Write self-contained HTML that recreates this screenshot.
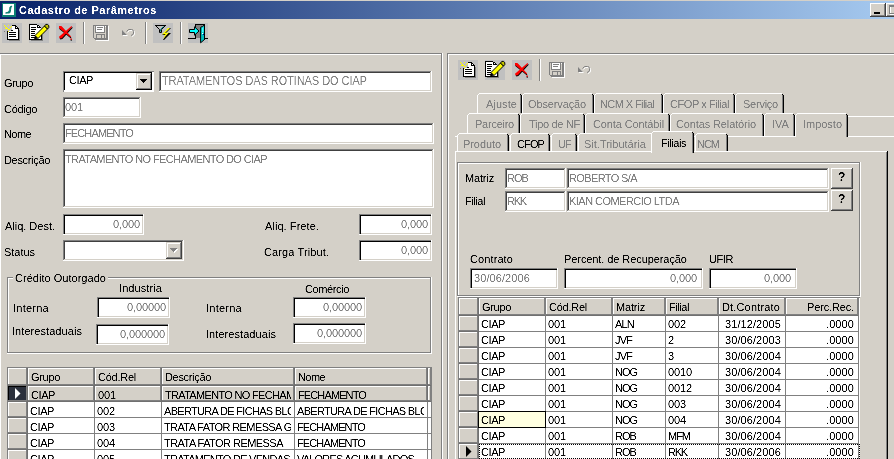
<!DOCTYPE html>
<html><head><meta charset="utf-8"><title>Cadastro de Parâmetros</title><style>
html,body{margin:0;padding:0;}
body{width:894px;height:459px;overflow:hidden;background:#D4D0C8;position:relative;font-family:"Liberation Sans",sans-serif;font-size:11px;}
div{position:absolute;}
svg{position:absolute;overflow:visible;}
.t{position:absolute;white-space:pre;line-height:13px;height:13px;will-change:transform;filter:url(#thr);}
</style></head><body>
<svg width="0" height="0" style="position:absolute"><filter id="thr" x="0" y="0" width="100%" height="100%" color-interpolation-filters="sRGB"><feComponentTransfer><feFuncA type="table" tableValues="0 0 0.25 0.85 1 1"/></feComponentTransfer></filter></svg>
<div style="left:0px;top:1px;width:894px;height:18px;background:linear-gradient(to right,#0A246A 0%,#0A246A 2%,#A6CAF0 100%);"></div>
<span id="t0" class="t" style="top:4px;color:#FFFFFF;font-weight:bold;letter-spacing:0.490px;left:19px;">Cadastro de Parâmetros</span>
<div style="left:2px;top:3px;width:14px;height:14px;background:#0A7F72;"></div>
<div style="left:3px;top:4px;width:11px;height:11px;background:#FFFFFF;"></div>
<svg style="left:2px;top:3px" width="14" height="14" viewBox="0 0 14 14"><path d="M9.8 3.2 C6.8 3.2 8.3 6 7.3 7.5 C6.6 9 5.8 9.5 3.6 10 L7.6 10 C9.3 8.5 7.8 5 9.8 3.2 Z" fill="#0A7F72" stroke="#0A7F72" stroke-width="1"/></svg>
<div style="left:870px;top:3px;width:16px;height:14px;background:#D4D0C8;"></div>
<div style="left:870px;top:3px;width:16px;height:1px;background:#FFFFFF;"></div>
<div style="left:870px;top:3px;width:1px;height:14px;background:#FFFFFF;"></div>
<div style="left:870px;top:16px;width:16px;height:1px;background:#404040;"></div>
<div style="left:885px;top:3px;width:1px;height:14px;background:#404040;"></div>
<div style="left:871px;top:15px;width:14px;height:1px;background:#808080;"></div>
<div style="left:884px;top:4px;width:1px;height:12px;background:#808080;"></div>
<div style="left:874px;top:12px;width:6px;height:2px;background:#000000;"></div>
<div style="left:886px;top:3px;width:16px;height:14px;background:#D4D0C8;"></div>
<div style="left:886px;top:3px;width:16px;height:1px;background:#FFFFFF;"></div>
<div style="left:886px;top:3px;width:1px;height:14px;background:#FFFFFF;"></div>
<div style="left:886px;top:16px;width:16px;height:1px;background:#404040;"></div>
<div style="left:901px;top:3px;width:1px;height:14px;background:#404040;"></div>
<div style="left:887px;top:15px;width:14px;height:1px;background:#808080;"></div>
<div style="left:900px;top:4px;width:1px;height:12px;background:#808080;"></div>
<div style="left:889px;top:5px;width:9px;height:2px;background:#808080;"></div>
<div style="left:889px;top:5px;width:1px;height:9px;background:#808080;"></div>
<div style="left:889px;top:13px;width:9px;height:1px;background:#808080;"></div>
<div style="left:890px;top:14px;width:9px;height:1px;background:#FFFFFF;"></div>
<div style="left:890px;top:7px;width:1px;height:6px;background:#FFFFFF;"></div>
<div style="left:2px;top:23px;width:20px;height:20px;background:#C0C0C0;"></div>
<div style="left:29px;top:23px;width:20px;height:20px;background:#C0C0C0;"></div>
<div style="left:56px;top:23px;width:20px;height:20px;background:#C0C0C0;"></div>
<div style="left:153px;top:23px;width:20px;height:20px;background:#C0C0C0;"></div>
<div style="left:188px;top:23px;width:20px;height:20px;background:#C0C0C0;"></div>
<svg style="left:2px;top:23px" width="20" height="20" viewBox="0 0 20 20" shape-rendering="crispEdges"><rect x="7" y="17" width="11" height="1" fill="#808080"/><rect x="17" y="7" width="1" height="10" fill="#808080"/><polygon points="6,8 10,8 10,3 14,3 17,6 17,17 6,17" fill="#fff"/><rect x="5" y="8" width="1" height="9" fill="#000"/><rect x="5" y="16" width="12" height="1" fill="#000"/><rect x="16" y="6" width="1" height="11" fill="#000"/><rect x="10" y="2" width="4" height="1" fill="#000"/><rect x="13" y="3" width="1" height="3" fill="#000"/><rect x="13" y="5" width="3" height="1" fill="#000"/><rect x="14" y="3" width="1" height="1" fill="#000"/><rect x="15" y="4" width="1" height="1" fill="#000"/><rect x="16" y="5" width="1" height="1" fill="#000"/><rect x="9" y="7" width="2" height="1" fill="#000"/><rect x="7" y="9" width="7" height="1" fill="#000"/><rect x="7" y="11" width="7" height="1" fill="#000"/><rect x="7" y="13" width="7" height="1" fill="#000"/><rect x="2" y="2" width="1" height="1" fill="#FFFF00"/><rect x="3" y="3" width="1" height="1" fill="#FFFF00"/><rect x="4" y="4" width="1" height="1" fill="#FFFF00"/><rect x="5" y="5" width="1" height="1" fill="#FFFF00"/><rect x="6" y="6" width="1" height="1" fill="#FFFF00"/><rect x="6" y="2" width="1" height="1" fill="#FFFF00"/><rect x="9" y="3" width="1" height="1" fill="#FFFF00"/><rect x="8" y="4" width="1" height="1" fill="#FFFF00"/><rect x="3" y="5" width="1" height="1" fill="#FFFF00"/><rect x="4" y="5" width="1" height="1" fill="#FFFF00"/><rect x="7" y="6" width="1" height="1" fill="#FFFF00"/><rect x="6" y="8" width="1" height="1" fill="#FFFF00"/><rect x="2" y="8" width="1" height="1" fill="#808080"/></svg>
<svg style="left:29px;top:23px" width="20" height="20" viewBox="0 0 20 20" shape-rendering="crispEdges"><rect x="2" y="17" width="11" height="1" fill="#808080"/><rect x="13" y="12" width="1" height="6" fill="#808080"/><polygon points="1,2 8,2 11,5 12,5 12,16 1,16" fill="#fff"/><rect x="0" y="1" width="1" height="16" fill="#000"/><rect x="0" y="1" width="8" height="1" fill="#000"/><rect x="0" y="16" width="13" height="1" fill="#000"/><rect x="12" y="10" width="1" height="7" fill="#000"/><rect x="8" y="2" width="1" height="3" fill="#000"/><rect x="8" y="4" width="3" height="1" fill="#000"/><rect x="9" y="2" width="1" height="1" fill="#000"/><rect x="10" y="3" width="1" height="1" fill="#000"/><rect x="11" y="4" width="1" height="1" fill="#000"/><rect x="2" y="4" width="5" height="1" fill="#000"/><rect x="2" y="6" width="5" height="1" fill="#000"/><rect x="2" y="8" width="4" height="1" fill="#000"/><rect x="2" y="10" width="4" height="1" fill="#000"/><rect x="2" y="12" width="4" height="1" fill="#000"/><rect x="2" y="14" width="4" height="1" fill="#000"/><polygon points="6,12.5 9,15.5 18.5,6 15.5,3" fill="#FFFF00" stroke="#000" stroke-width="1" shape-rendering="auto"/><polygon points="15.5,3 18.5,6 19.8,4.6 19.8,2.6 18.4,1.4 16.8,1.4" fill="#C0C000" stroke="#000" stroke-width="1" shape-rendering="auto"/><polygon points="5,16.5 6,12.5 9,15.5" fill="#000" shape-rendering="auto"/></svg>
<svg style="left:56px;top:23px" width="20" height="20" viewBox="0 0 20 20"><polygon points="3,3 5.4,3 15.1,13.5 14.4,14.2 3,5" fill="#000" transform="translate(0.3,1)"/><polygon points="15.5,3.1 16.1,3.8 5.8,15.2 3.7,15.5 3,13.8" fill="#000" transform="translate(0.6,0.9)"/><polygon points="3,3 5.4,3 15.1,13.5 14.4,14.2 3,5" fill="#FF0000"/><polygon points="15.5,3.1 16.1,3.8 5.8,15.2 3.7,15.5 3,13.8" fill="#FF0000"/><rect x="14.6" y="16.4" width="1.4" height="1.2" fill="#000"/><rect x="14.4" y="15.4" width="1.4" height="1.3" fill="#FF0000"/></svg>
<svg style="left:93px;top:25px" width="17" height="17" viewBox="0 0 17 17" shape-rendering="crispEdges"><rect x="3" y="15" width="13" height="1" fill="#fff"/><rect x="15" y="1" width="1" height="15" fill="#fff"/><rect x="0" y="0" width="15" height="1" fill="#808080"/><rect x="0" y="0" width="1" height="13" fill="#808080"/><rect x="13" y="0" width="2" height="15" fill="#808080"/><rect x="1" y="13" width="14" height="1" fill="#808080"/><rect x="2" y="14" width="13" height="1" fill="#808080"/><rect x="3" y="1" width="8" height="6" fill="#fff"/><rect x="2" y="0" width="1" height="8" fill="#808080"/><rect x="11" y="0" width="1" height="8" fill="#808080"/><rect x="2" y="7" width="10" height="1" fill="#808080"/><rect x="4" y="2" width="6" height="1" fill="#808080"/><rect x="4" y="4" width="5" height="1" fill="#808080"/><rect x="12" y="1" width="1" height="1" fill="#fff"/><rect x="3" y="9" width="9" height="1" fill="#808080"/><rect x="3" y="9" width="1" height="4" fill="#808080"/><rect x="11" y="9" width="1" height="4" fill="#808080"/><rect x="8" y="10" width="1" height="3" fill="#808080"/></svg>
<svg style="left:121px;top:27px" width="16" height="12" viewBox="0 0 16 12"><path d="M5.5 4.5 L7.5 2.5 L10.5 2.5 Q12.5 2.5 12.5 4.5 L12.5 6 Q12.5 7.5 11 8 L10 8.5" stroke="#fff" stroke-width="1" fill="none" transform="translate(1,1)"/><polygon points="1,3 1,8 6,8" fill="#fff" transform="translate(1,1)"/><path d="M5.5 4.5 L7.5 2.5 L10.5 2.5 Q12.5 2.5 12.5 4.5 L12.5 6 Q12.5 7.5 11 8 L10 8.5" stroke="#808080" stroke-width="1" fill="none"/><polygon points="1,3 1,8 6,8" fill="#808080"/></svg>
<svg style="left:153px;top:23px" width="20" height="20" viewBox="0 0 20 20" shape-rendering="crispEdges"><polygon points="2.5,2.5 12.5,2.5 8.5,6.5 8.5,9.5 6.5,9.5 6.5,6.5" fill="#C0C0C0" stroke="#000" stroke-width="1" shape-rendering="auto"/><rect x="2" y="2" width="11" height="1" fill="#000"/><path d="M10.5 3.5 L7.5 6.5 L7.5 8.5" stroke="#008080" stroke-width="1" fill="none" shape-rendering="auto"/><polygon points="16,5 18,5 13,10 18,10 11,17 10,17 13,12 9,12" fill="#000" shape-rendering="auto"/><polygon points="15,5 17,5 12,10 16,9.6 10,16 12.5,11 9,11.6" fill="#FFFF00" shape-rendering="auto"/></svg>
<svg style="left:188px;top:23px" width="20" height="20" viewBox="0 0 20 20" shape-rendering="crispEdges"><rect x="8" y="2" width="6" height="13" fill="#808080"/><rect x="7" y="1" width="10" height="1" fill="#000"/><rect x="7" y="1" width="1" height="4" fill="#000"/><rect x="7" y="11" width="1" height="5" fill="#000"/><rect x="0" y="15" width="8" height="1" fill="#000"/><rect x="17" y="15" width="3" height="1" fill="#000"/><polygon points="12.6,4.4 16.5,2 16.5,16.5 12.6,19.8" fill="#00C0C0" stroke="#000" stroke-width="1" shape-rendering="auto"/><rect x="16" y="1" width="1" height="16" fill="#000"/><rect x="14" y="10" width="1" height="1" fill="#fff"/><rect x="15" y="11" width="1" height="1" fill="#000080"/><path d="M14 5 L15.5 4 L15.5 9 L14 9.6 Z" fill="#40FFFF" shape-rendering="auto"/><polygon points="1.5,6.5 6.5,6.5 6.5,3.8 11,8 6.5,12.2 6.5,9.5 1.5,9.5" fill="#00FFFF" stroke="#000" stroke-width="1" shape-rendering="auto"/></svg>
<div style="left:83px;top:22px;width:1px;height:22px;background:#808080;"></div>
<div style="left:84px;top:22px;width:1px;height:22px;background:#FFFFFF;"></div>
<div style="left:145px;top:22px;width:1px;height:22px;background:#808080;"></div>
<div style="left:146px;top:22px;width:1px;height:22px;background:#FFFFFF;"></div>
<div style="left:180px;top:22px;width:1px;height:22px;background:#808080;"></div>
<div style="left:181px;top:22px;width:1px;height:22px;background:#FFFFFF;"></div>
<div style="left:-1px;top:53px;width:444px;height:1px;background:#808080;"></div>
<div style="left:-1px;top:53px;width:1px;height:418px;background:#808080;"></div>
<div style="left:0px;top:54px;width:442px;height:1px;background:#FFFFFF;"></div>
<div style="left:0px;top:54px;width:1px;height:416px;background:#FFFFFF;"></div>
<div style="left:0px;top:469px;width:442px;height:1px;background:#808080;"></div>
<div style="left:441px;top:54px;width:1px;height:416px;background:#808080;"></div>
<div style="left:-1px;top:470px;width:444px;height:1px;background:#FFFFFF;"></div>
<div style="left:442px;top:53px;width:1px;height:418px;background:#FFFFFF;"></div>
<span id="t1" class="t" style="top:77px;color:#000000;letter-spacing:-0.319px;left:4px;">Grupo</span>
<div style="left:63px;top:71px;width:91px;height:21px;background:#FFFFFF;"></div>
<div style="left:63px;top:71px;width:91px;height:1px;background:#808080;"></div>
<div style="left:63px;top:71px;width:1px;height:21px;background:#808080;"></div>
<div style="left:64px;top:72px;width:88px;height:1px;background:#000000;"></div>
<div style="left:64px;top:72px;width:1px;height:18px;background:#000000;"></div>
<div style="left:136px;top:73px;width:16px;height:17px;background:#D4D0C8;"></div>
<div style="left:137px;top:74px;width:13px;height:1px;background:#FFFFFF;"></div>
<div style="left:137px;top:74px;width:1px;height:14px;background:#FFFFFF;"></div>
<div style="left:136px;top:89px;width:16px;height:1px;background:#000000;"></div>
<div style="left:151px;top:73px;width:1px;height:17px;background:#000000;"></div>
<div style="left:137px;top:88px;width:14px;height:1px;background:#808080;"></div>
<div style="left:150px;top:74px;width:1px;height:15px;background:#808080;"></div>
<div style="left:140px;top:79px;width:7px;height:1px;background:#000000;"></div>
<div style="left:141px;top:80px;width:5px;height:1px;background:#000000;"></div>
<div style="left:142px;top:81px;width:3px;height:1px;background:#000000;"></div>
<div style="left:143px;top:82px;width:1px;height:1px;background:#000000;"></div>
<span id="t2" class="t" style="top:74px;color:#000000;letter-spacing:-0.422px;left:69px;">CIAP</span>
<div style="left:159px;top:71px;width:273px;height:21px;background:#FFFFFF;"></div>
<div style="left:159px;top:71px;width:273px;height:1px;background:#808080;"></div>
<div style="left:159px;top:71px;width:1px;height:21px;background:#808080;"></div>
<div style="left:160px;top:72px;width:271px;height:1px;background:#404040;"></div>
<div style="left:160px;top:72px;width:1px;height:19px;background:#404040;"></div>
<div style="left:159px;top:91px;width:273px;height:1px;background:#FFFFFF;"></div>
<div style="left:431px;top:71px;width:1px;height:21px;background:#FFFFFF;"></div>
<div style="left:160px;top:90px;width:271px;height:1px;background:#D4D0C8;"></div>
<div style="left:430px;top:72px;width:1px;height:19px;background:#D4D0C8;"></div>
<span id="t3" class="t" style="top:75px;color:#808080;font-size:12px;left:162px;transform:scaleX(0.9066);transform-origin:0 0;">TRATAMENTOS DAS ROTINAS DO CIAP</span>
<span id="t4" class="t" style="top:103px;color:#000000;letter-spacing:-0.312px;left:4px;">Código</span>
<div style="left:63px;top:97px;width:78px;height:21px;background:#FFFFFF;"></div>
<div style="left:63px;top:97px;width:78px;height:1px;background:#808080;"></div>
<div style="left:63px;top:97px;width:1px;height:21px;background:#808080;"></div>
<div style="left:64px;top:98px;width:76px;height:1px;background:#404040;"></div>
<div style="left:64px;top:98px;width:1px;height:19px;background:#404040;"></div>
<div style="left:63px;top:117px;width:78px;height:1px;background:#FFFFFF;"></div>
<div style="left:140px;top:97px;width:1px;height:21px;background:#FFFFFF;"></div>
<div style="left:64px;top:116px;width:76px;height:1px;background:#D4D0C8;"></div>
<div style="left:139px;top:98px;width:1px;height:19px;background:#D4D0C8;"></div>
<span id="t5" class="t" style="top:101px;color:#808080;letter-spacing:-0.125px;left:65px;">001</span>
<span id="t6" class="t" style="top:128px;color:#000000;letter-spacing:-0.586px;left:4px;">Nome</span>
<div style="left:63px;top:123px;width:371px;height:21px;background:#FFFFFF;"></div>
<div style="left:63px;top:123px;width:371px;height:1px;background:#808080;"></div>
<div style="left:63px;top:123px;width:1px;height:21px;background:#808080;"></div>
<div style="left:64px;top:124px;width:369px;height:1px;background:#404040;"></div>
<div style="left:64px;top:124px;width:1px;height:19px;background:#404040;"></div>
<div style="left:63px;top:143px;width:371px;height:1px;background:#FFFFFF;"></div>
<div style="left:433px;top:123px;width:1px;height:21px;background:#FFFFFF;"></div>
<div style="left:64px;top:142px;width:369px;height:1px;background:#D4D0C8;"></div>
<div style="left:432px;top:124px;width:1px;height:19px;background:#D4D0C8;"></div>
<span id="t7" class="t" style="top:127px;color:#808080;letter-spacing:-0.880px;left:65px;">FECHAMENTO</span>
<span id="t8" class="t" style="top:154px;color:#000000;letter-spacing:-0.323px;left:4px;">Descrição</span>
<div style="left:63px;top:149px;width:371px;height:59px;background:#FFFFFF;"></div>
<div style="left:63px;top:149px;width:371px;height:1px;background:#808080;"></div>
<div style="left:63px;top:149px;width:1px;height:59px;background:#808080;"></div>
<div style="left:64px;top:150px;width:369px;height:1px;background:#404040;"></div>
<div style="left:64px;top:150px;width:1px;height:57px;background:#404040;"></div>
<div style="left:63px;top:207px;width:371px;height:1px;background:#FFFFFF;"></div>
<div style="left:433px;top:149px;width:1px;height:59px;background:#FFFFFF;"></div>
<div style="left:64px;top:206px;width:369px;height:1px;background:#D4D0C8;"></div>
<div style="left:432px;top:150px;width:1px;height:57px;background:#D4D0C8;"></div>
<span id="t9" class="t" style="top:153px;color:#808080;letter-spacing:-0.615px;left:65px;">TRATAMENTO NO FECHAMENTO DO CIAP</span>
<span id="t10" class="t" style="top:220px;color:#000000;letter-spacing:-0.014px;left:5px;">Aliq. Dest.</span>
<div style="left:63px;top:214px;width:81px;height:21px;background:#FFFFFF;"></div>
<div style="left:63px;top:214px;width:81px;height:1px;background:#808080;"></div>
<div style="left:63px;top:214px;width:1px;height:21px;background:#808080;"></div>
<div style="left:64px;top:215px;width:79px;height:1px;background:#404040;"></div>
<div style="left:64px;top:215px;width:1px;height:19px;background:#404040;"></div>
<div style="left:63px;top:234px;width:81px;height:1px;background:#FFFFFF;"></div>
<div style="left:143px;top:214px;width:1px;height:21px;background:#FFFFFF;"></div>
<div style="left:64px;top:233px;width:79px;height:1px;background:#D4D0C8;"></div>
<div style="left:142px;top:215px;width:1px;height:19px;background:#D4D0C8;"></div>
<div style="left:64px;top:215px;width:79px;height:1px;background:#000000;"></div>
<div style="left:64px;top:215px;width:1px;height:19px;background:#000000;"></div>
<span id="t11" class="t" style="top:218px;color:#808080;letter-spacing:-0.113px;right:754.11px;">0,000</span>
<span id="t12" class="t" style="top:246px;color:#000000;letter-spacing:-0.036px;left:4px;">Status</span>
<div style="left:63px;top:240px;width:121px;height:21px;background:#FFFFFF;"></div>
<div style="left:63px;top:240px;width:121px;height:1px;background:#808080;"></div>
<div style="left:63px;top:240px;width:1px;height:21px;background:#808080;"></div>
<div style="left:64px;top:241px;width:119px;height:1px;background:#404040;"></div>
<div style="left:64px;top:241px;width:1px;height:19px;background:#404040;"></div>
<div style="left:63px;top:260px;width:121px;height:1px;background:#FFFFFF;"></div>
<div style="left:183px;top:240px;width:1px;height:21px;background:#FFFFFF;"></div>
<div style="left:64px;top:259px;width:119px;height:1px;background:#D4D0C8;"></div>
<div style="left:182px;top:241px;width:1px;height:19px;background:#D4D0C8;"></div>
<div style="left:166px;top:242px;width:16px;height:17px;background:#D4D0C8;"></div>
<div style="left:167px;top:243px;width:13px;height:1px;background:#FFFFFF;"></div>
<div style="left:167px;top:243px;width:1px;height:14px;background:#FFFFFF;"></div>
<div style="left:166px;top:258px;width:16px;height:1px;background:#404040;"></div>
<div style="left:181px;top:242px;width:1px;height:17px;background:#404040;"></div>
<div style="left:167px;top:257px;width:14px;height:1px;background:#808080;"></div>
<div style="left:180px;top:243px;width:1px;height:15px;background:#808080;"></div>
<div style="left:171px;top:249px;width:7px;height:1px;background:#FFFFFF;"></div>
<div style="left:172px;top:250px;width:5px;height:1px;background:#FFFFFF;"></div>
<div style="left:173px;top:251px;width:3px;height:1px;background:#FFFFFF;"></div>
<div style="left:174px;top:252px;width:1px;height:1px;background:#FFFFFF;"></div>
<div style="left:170px;top:248px;width:7px;height:1px;background:#808080;"></div>
<div style="left:171px;top:249px;width:5px;height:1px;background:#808080;"></div>
<div style="left:172px;top:250px;width:3px;height:1px;background:#808080;"></div>
<div style="left:173px;top:251px;width:1px;height:1px;background:#808080;"></div>
<span id="t13" class="t" style="top:220px;color:#000000;letter-spacing:0.065px;left:265px;">Aliq. Frete.</span>
<div style="left:359px;top:214px;width:73px;height:21px;background:#FFFFFF;"></div>
<div style="left:359px;top:214px;width:73px;height:1px;background:#808080;"></div>
<div style="left:359px;top:214px;width:1px;height:21px;background:#808080;"></div>
<div style="left:360px;top:215px;width:71px;height:1px;background:#404040;"></div>
<div style="left:360px;top:215px;width:1px;height:19px;background:#404040;"></div>
<div style="left:359px;top:234px;width:73px;height:1px;background:#FFFFFF;"></div>
<div style="left:431px;top:214px;width:1px;height:21px;background:#FFFFFF;"></div>
<div style="left:360px;top:233px;width:71px;height:1px;background:#D4D0C8;"></div>
<div style="left:430px;top:215px;width:1px;height:19px;background:#D4D0C8;"></div>
<div style="left:360px;top:215px;width:71px;height:1px;background:#000000;"></div>
<div style="left:360px;top:215px;width:1px;height:19px;background:#000000;"></div>
<span id="t14" class="t" style="top:218px;color:#808080;letter-spacing:-0.113px;right:466.11px;">0,000</span>
<span id="t15" class="t" style="top:246px;color:#000000;letter-spacing:0.107px;left:264px;">Carga Tribut.</span>
<div style="left:359px;top:240px;width:73px;height:21px;background:#FFFFFF;"></div>
<div style="left:359px;top:240px;width:73px;height:1px;background:#808080;"></div>
<div style="left:359px;top:240px;width:1px;height:21px;background:#808080;"></div>
<div style="left:360px;top:241px;width:71px;height:1px;background:#404040;"></div>
<div style="left:360px;top:241px;width:1px;height:19px;background:#404040;"></div>
<div style="left:359px;top:260px;width:73px;height:1px;background:#FFFFFF;"></div>
<div style="left:431px;top:240px;width:1px;height:21px;background:#FFFFFF;"></div>
<div style="left:360px;top:259px;width:71px;height:1px;background:#D4D0C8;"></div>
<div style="left:430px;top:241px;width:1px;height:19px;background:#D4D0C8;"></div>
<div style="left:360px;top:241px;width:71px;height:1px;background:#000000;"></div>
<div style="left:360px;top:241px;width:1px;height:19px;background:#000000;"></div>
<span id="t16" class="t" style="top:244px;color:#808080;letter-spacing:-0.113px;right:466.11px;">0,000</span>
<div style="left:7px;top:277px;width:425px;height:1px;background:#808080;"></div>
<div style="left:7px;top:277px;width:1px;height:77px;background:#808080;"></div>
<div style="left:8px;top:278px;width:423px;height:1px;background:#FFFFFF;"></div>
<div style="left:8px;top:278px;width:1px;height:75px;background:#FFFFFF;"></div>
<div style="left:8px;top:352px;width:423px;height:1px;background:#808080;"></div>
<div style="left:430px;top:278px;width:1px;height:75px;background:#808080;"></div>
<div style="left:7px;top:353px;width:425px;height:1px;background:#FFFFFF;"></div>
<div style="left:431px;top:277px;width:1px;height:77px;background:#FFFFFF;"></div>
<div style="left:13px;top:272px;width:95px;height:12px;background:#D4D0C8;"></div>
<span id="t17" class="t" style="top:272px;color:#000000;letter-spacing:0.026px;left:15px;">Crédito Outorgado</span>
<span id="t18" class="t" style="top:282px;color:#000000;letter-spacing:0.087px;left:119px;">Industria</span>
<span id="t19" class="t" style="top:283px;color:#000000;letter-spacing:-0.383px;left:305px;">Comércio</span>
<span id="t20" class="t" style="top:302px;color:#000000;letter-spacing:0.246px;left:13px;">Interna</span>
<span id="t21" class="t" style="top:325px;color:#000000;letter-spacing:0.060px;left:12px;">Interestaduais</span>
<span id="t22" class="t" style="top:302px;color:#000000;letter-spacing:0.246px;left:206px;">Interna</span>
<span id="t23" class="t" style="top:328px;color:#000000;letter-spacing:0.060px;left:206px;">Interestaduais</span>
<div style="left:97px;top:297px;width:73px;height:21px;background:#FFFFFF;"></div>
<div style="left:97px;top:297px;width:73px;height:1px;background:#808080;"></div>
<div style="left:97px;top:297px;width:1px;height:21px;background:#808080;"></div>
<div style="left:98px;top:298px;width:71px;height:1px;background:#404040;"></div>
<div style="left:98px;top:298px;width:1px;height:19px;background:#404040;"></div>
<div style="left:97px;top:317px;width:73px;height:1px;background:#FFFFFF;"></div>
<div style="left:169px;top:297px;width:1px;height:21px;background:#FFFFFF;"></div>
<div style="left:98px;top:316px;width:71px;height:1px;background:#D4D0C8;"></div>
<div style="left:168px;top:298px;width:1px;height:19px;background:#D4D0C8;"></div>
<div style="left:98px;top:298px;width:71px;height:1px;background:#000000;"></div>
<div style="left:98px;top:298px;width:1px;height:19px;background:#000000;"></div>
<span id="t24" class="t" style="top:301px;color:#808080;letter-spacing:-0.116px;right:728.12px;">0,00000</span>
<div style="left:96px;top:324px;width:73px;height:21px;background:#FFFFFF;"></div>
<div style="left:96px;top:324px;width:73px;height:1px;background:#808080;"></div>
<div style="left:96px;top:324px;width:1px;height:21px;background:#808080;"></div>
<div style="left:97px;top:325px;width:71px;height:1px;background:#404040;"></div>
<div style="left:97px;top:325px;width:1px;height:19px;background:#404040;"></div>
<div style="left:96px;top:344px;width:73px;height:1px;background:#FFFFFF;"></div>
<div style="left:168px;top:324px;width:1px;height:21px;background:#FFFFFF;"></div>
<div style="left:97px;top:343px;width:71px;height:1px;background:#D4D0C8;"></div>
<div style="left:167px;top:325px;width:1px;height:19px;background:#D4D0C8;"></div>
<div style="left:97px;top:325px;width:71px;height:1px;background:#000000;"></div>
<div style="left:97px;top:325px;width:1px;height:19px;background:#000000;"></div>
<span id="t25" class="t" style="top:328px;color:#808080;letter-spacing:-0.117px;right:729.12px;">0,000000</span>
<div style="left:293px;top:297px;width:73px;height:21px;background:#FFFFFF;"></div>
<div style="left:293px;top:297px;width:73px;height:1px;background:#808080;"></div>
<div style="left:293px;top:297px;width:1px;height:21px;background:#808080;"></div>
<div style="left:294px;top:298px;width:71px;height:1px;background:#404040;"></div>
<div style="left:294px;top:298px;width:1px;height:19px;background:#404040;"></div>
<div style="left:293px;top:317px;width:73px;height:1px;background:#FFFFFF;"></div>
<div style="left:365px;top:297px;width:1px;height:21px;background:#FFFFFF;"></div>
<div style="left:294px;top:316px;width:71px;height:1px;background:#D4D0C8;"></div>
<div style="left:364px;top:298px;width:1px;height:19px;background:#D4D0C8;"></div>
<div style="left:294px;top:298px;width:71px;height:1px;background:#000000;"></div>
<div style="left:294px;top:298px;width:1px;height:19px;background:#000000;"></div>
<span id="t26" class="t" style="top:301px;color:#808080;letter-spacing:-0.116px;right:532.12px;">0,00000</span>
<div style="left:293px;top:323px;width:73px;height:21px;background:#FFFFFF;"></div>
<div style="left:293px;top:323px;width:73px;height:1px;background:#808080;"></div>
<div style="left:293px;top:323px;width:1px;height:21px;background:#808080;"></div>
<div style="left:294px;top:324px;width:71px;height:1px;background:#404040;"></div>
<div style="left:294px;top:324px;width:1px;height:19px;background:#404040;"></div>
<div style="left:293px;top:343px;width:73px;height:1px;background:#FFFFFF;"></div>
<div style="left:365px;top:323px;width:1px;height:21px;background:#FFFFFF;"></div>
<div style="left:294px;top:342px;width:71px;height:1px;background:#D4D0C8;"></div>
<div style="left:364px;top:324px;width:1px;height:19px;background:#D4D0C8;"></div>
<div style="left:294px;top:324px;width:71px;height:1px;background:#000000;"></div>
<div style="left:294px;top:324px;width:1px;height:19px;background:#000000;"></div>
<span id="t27" class="t" style="top:327px;color:#808080;letter-spacing:-0.117px;right:532.12px;">0,000000</span>
<div style="left:7px;top:367px;width:425px;height:1px;background:#808080;"></div>
<div style="left:7px;top:367px;width:1px;height:104px;background:#808080;"></div>
<div style="left:431px;top:367px;width:1px;height:104px;background:#808080;"></div>
<div style="left:8px;top:368px;width:423px;height:100px;background:#FFFFFF;"></div>
<div style="left:8px;top:368px;width:19px;height:17px;background:#D4D0C8;"></div>
<div style="left:8px;top:368px;width:19px;height:1px;background:#FFFFFF;"></div>
<div style="left:8px;top:368px;width:1px;height:17px;background:#FFFFFF;"></div>
<div style="left:8px;top:384px;width:19px;height:1px;background:#808080;"></div>
<div style="left:26px;top:368px;width:1px;height:17px;background:#808080;"></div>
<div style="left:28px;top:368px;width:66px;height:17px;background:#D4D0C8;"></div>
<div style="left:28px;top:368px;width:66px;height:1px;background:#FFFFFF;"></div>
<div style="left:28px;top:368px;width:1px;height:17px;background:#FFFFFF;"></div>
<div style="left:28px;top:384px;width:66px;height:1px;background:#808080;"></div>
<div style="left:93px;top:368px;width:1px;height:17px;background:#808080;"></div>
<div style="left:95px;top:368px;width:66px;height:17px;background:#D4D0C8;"></div>
<div style="left:95px;top:368px;width:66px;height:1px;background:#FFFFFF;"></div>
<div style="left:95px;top:368px;width:1px;height:17px;background:#FFFFFF;"></div>
<div style="left:95px;top:384px;width:66px;height:1px;background:#808080;"></div>
<div style="left:160px;top:368px;width:1px;height:17px;background:#808080;"></div>
<div style="left:162px;top:368px;width:132px;height:17px;background:#D4D0C8;"></div>
<div style="left:162px;top:368px;width:132px;height:1px;background:#FFFFFF;"></div>
<div style="left:162px;top:368px;width:1px;height:17px;background:#FFFFFF;"></div>
<div style="left:162px;top:384px;width:132px;height:1px;background:#808080;"></div>
<div style="left:293px;top:368px;width:1px;height:17px;background:#808080;"></div>
<div style="left:295px;top:368px;width:132px;height:17px;background:#D4D0C8;"></div>
<div style="left:295px;top:368px;width:132px;height:1px;background:#FFFFFF;"></div>
<div style="left:295px;top:368px;width:1px;height:17px;background:#FFFFFF;"></div>
<div style="left:295px;top:384px;width:132px;height:1px;background:#808080;"></div>
<div style="left:426px;top:368px;width:1px;height:17px;background:#808080;"></div>
<div style="left:428px;top:368px;width:3px;height:17px;background:#D4D0C8;"></div>
<div style="left:428px;top:368px;width:3px;height:1px;background:#FFFFFF;"></div>
<div style="left:428px;top:368px;width:1px;height:17px;background:#FFFFFF;"></div>
<div style="left:428px;top:384px;width:3px;height:1px;background:#808080;"></div>
<div style="left:430px;top:368px;width:1px;height:17px;background:#808080;"></div>
<div style="left:8px;top:385px;width:423px;height:1px;background:#707070;"></div>
<div style="left:27px;top:368px;width:1px;height:103px;background:#808080;"></div>
<div style="left:94px;top:368px;width:1px;height:103px;background:#808080;"></div>
<div style="left:161px;top:368px;width:1px;height:103px;background:#808080;"></div>
<div style="left:294px;top:368px;width:1px;height:103px;background:#808080;"></div>
<div style="left:427px;top:368px;width:1px;height:103px;background:#808080;"></div>
<div style="left:27px;top:368px;width:1px;height:34px;background:#707070;"></div>
<div style="left:94px;top:368px;width:1px;height:34px;background:#707070;"></div>
<div style="left:161px;top:368px;width:1px;height:34px;background:#707070;"></div>
<div style="left:294px;top:368px;width:1px;height:34px;background:#707070;"></div>
<div style="left:427px;top:368px;width:1px;height:34px;background:#707070;"></div>
<div style="left:8px;top:401px;width:423px;height:1px;background:#808080;"></div>
<div style="left:8px;top:417px;width:423px;height:1px;background:#808080;"></div>
<div style="left:8px;top:433px;width:423px;height:1px;background:#808080;"></div>
<div style="left:8px;top:449px;width:423px;height:1px;background:#808080;"></div>
<div style="left:8px;top:465px;width:423px;height:1px;background:#808080;"></div>
<div style="left:8px;top:386px;width:19px;height:15px;background:#D4D0C8;"></div>
<div style="left:8px;top:386px;width:19px;height:1px;background:#FFFFFF;"></div>
<div style="left:8px;top:386px;width:1px;height:15px;background:#FFFFFF;"></div>
<div style="left:8px;top:400px;width:19px;height:1px;background:#808080;"></div>
<div style="left:26px;top:386px;width:1px;height:15px;background:#808080;"></div>
<div style="left:8px;top:402px;width:19px;height:15px;background:#D4D0C8;"></div>
<div style="left:8px;top:402px;width:19px;height:1px;background:#FFFFFF;"></div>
<div style="left:8px;top:402px;width:1px;height:15px;background:#FFFFFF;"></div>
<div style="left:8px;top:416px;width:19px;height:1px;background:#808080;"></div>
<div style="left:26px;top:402px;width:1px;height:15px;background:#808080;"></div>
<div style="left:8px;top:418px;width:19px;height:15px;background:#D4D0C8;"></div>
<div style="left:8px;top:418px;width:19px;height:1px;background:#FFFFFF;"></div>
<div style="left:8px;top:418px;width:1px;height:15px;background:#FFFFFF;"></div>
<div style="left:8px;top:432px;width:19px;height:1px;background:#808080;"></div>
<div style="left:26px;top:418px;width:1px;height:15px;background:#808080;"></div>
<div style="left:8px;top:434px;width:19px;height:15px;background:#D4D0C8;"></div>
<div style="left:8px;top:434px;width:19px;height:1px;background:#FFFFFF;"></div>
<div style="left:8px;top:434px;width:1px;height:15px;background:#FFFFFF;"></div>
<div style="left:8px;top:448px;width:19px;height:1px;background:#808080;"></div>
<div style="left:26px;top:434px;width:1px;height:15px;background:#808080;"></div>
<div style="left:8px;top:450px;width:19px;height:15px;background:#D4D0C8;"></div>
<div style="left:8px;top:450px;width:19px;height:1px;background:#FFFFFF;"></div>
<div style="left:8px;top:450px;width:1px;height:15px;background:#FFFFFF;"></div>
<div style="left:8px;top:464px;width:19px;height:1px;background:#808080;"></div>
<div style="left:26px;top:450px;width:1px;height:15px;background:#808080;"></div>
<div style="left:27px;top:368px;width:1px;height:103px;background:#707070;"></div>
<div style="left:8px;top:401px;width:20px;height:1px;background:#707070;"></div>
<div style="left:8px;top:417px;width:20px;height:1px;background:#707070;"></div>
<div style="left:8px;top:433px;width:20px;height:1px;background:#707070;"></div>
<div style="left:8px;top:449px;width:20px;height:1px;background:#707070;"></div>
<div style="left:8px;top:465px;width:20px;height:1px;background:#707070;"></div>
<div style="left:28px;top:386px;width:66px;height:15px;background:#D4D0C8;"></div>
<div style="left:28px;top:386px;width:66px;height:1px;background:#FFFFFF;"></div>
<div style="left:28px;top:386px;width:1px;height:15px;background:#FFFFFF;"></div>
<div style="left:28px;top:400px;width:66px;height:1px;background:#808080;"></div>
<div style="left:93px;top:386px;width:1px;height:15px;background:#808080;"></div>
<div style="left:95px;top:386px;width:66px;height:15px;background:#D4D0C8;"></div>
<div style="left:95px;top:386px;width:66px;height:1px;background:#FFFFFF;"></div>
<div style="left:95px;top:386px;width:1px;height:15px;background:#FFFFFF;"></div>
<div style="left:95px;top:400px;width:66px;height:1px;background:#808080;"></div>
<div style="left:160px;top:386px;width:1px;height:15px;background:#808080;"></div>
<div style="left:162px;top:386px;width:132px;height:15px;background:#D4D0C8;"></div>
<div style="left:162px;top:386px;width:132px;height:1px;background:#FFFFFF;"></div>
<div style="left:162px;top:386px;width:1px;height:15px;background:#FFFFFF;"></div>
<div style="left:162px;top:400px;width:132px;height:1px;background:#808080;"></div>
<div style="left:293px;top:386px;width:1px;height:15px;background:#808080;"></div>
<div style="left:295px;top:386px;width:132px;height:15px;background:#D4D0C8;"></div>
<div style="left:295px;top:386px;width:132px;height:1px;background:#FFFFFF;"></div>
<div style="left:295px;top:386px;width:1px;height:15px;background:#FFFFFF;"></div>
<div style="left:295px;top:400px;width:132px;height:1px;background:#808080;"></div>
<div style="left:426px;top:386px;width:1px;height:15px;background:#808080;"></div>
<div style="left:428px;top:386px;width:3px;height:15px;background:#D4D0C8;"></div>
<div style="left:428px;top:386px;width:3px;height:1px;background:#FFFFFF;"></div>
<div style="left:428px;top:386px;width:1px;height:15px;background:#FFFFFF;"></div>
<div style="left:428px;top:400px;width:3px;height:1px;background:#808080;"></div>
<div style="left:430px;top:386px;width:1px;height:15px;background:#808080;"></div>
<div style="left:8px;top:401px;width:423px;height:1px;background:#707070;"></div>
<div style="left:8px;top:386px;width:18px;height:14px;background:#2B303C;"></div>
<div style="left:8px;top:386px;width:18px;height:1px;background:#000000;"></div>
<div style="left:8px;top:386px;width:1px;height:14px;background:#000000;"></div>
<svg style="left:15px;top:388px" width="7" height="11"><path d="M0 0 L0 11 L5.5 5.5 Z" fill="#fff"/></svg>
<span id="t28" class="t" style="top:371px;color:#000000;letter-spacing:-0.319px;left:31px;">Grupo</span>
<span id="t29" class="t" style="top:371px;color:#000000;letter-spacing:-0.250px;left:98px;">Cód.Rel</span>
<span id="t30" class="t" style="top:371px;color:#000000;letter-spacing:-0.323px;left:165px;">Descrição</span>
<span id="t31" class="t" style="top:371px;color:#000000;letter-spacing:-0.586px;left:298px;">Nome</span>
<span id="t32" class="t" style="top:389px;color:#000000;letter-spacing:-0.422px;left:31px;width:60px;overflow:hidden;">CIAP</span>
<span id="t33" class="t" style="top:389px;color:#000000;letter-spacing:-0.125px;left:98px;width:60px;overflow:hidden;">001</span>
<span id="t34" class="t" style="top:389px;color:#000000;letter-spacing:-0.682px;left:165px;width:126px;overflow:hidden;">TRATAMENTO NO FECHAMENTO</span>
<span id="t35" class="t" style="top:389px;color:#000000;letter-spacing:-0.880px;left:298px;width:126px;overflow:hidden;">FECHAMENTO</span>
<span id="t36" class="t" style="top:405px;color:#000000;letter-spacing:-0.422px;left:30px;width:61px;overflow:hidden;">CIAP</span>
<span id="t37" class="t" style="top:405px;color:#000000;letter-spacing:-0.125px;left:97px;width:61px;overflow:hidden;">002</span>
<span id="t38" class="t" style="top:405px;color:#000000;letter-spacing:-0.685px;left:164px;width:127px;overflow:hidden;">ABERTURA DE FICHAS BLOCO</span>
<span id="t39" class="t" style="top:405px;color:#000000;letter-spacing:-0.685px;left:297px;width:127px;overflow:hidden;">ABERTURA DE FICHAS BLOCO</span>
<span id="t40" class="t" style="top:421px;color:#000000;letter-spacing:-0.422px;left:30px;width:61px;overflow:hidden;">CIAP</span>
<span id="t41" class="t" style="top:421px;color:#000000;letter-spacing:-0.125px;left:97px;width:61px;overflow:hidden;">003</span>
<span id="t42" class="t" style="top:421px;color:#000000;letter-spacing:-0.608px;left:164px;width:127px;overflow:hidden;">TRATA FATOR REMESSA GERAL</span>
<span id="t43" class="t" style="top:421px;color:#000000;letter-spacing:-0.880px;left:297px;width:127px;overflow:hidden;">FECHAMENTO</span>
<span id="t44" class="t" style="top:437px;color:#000000;letter-spacing:-0.422px;left:30px;width:61px;overflow:hidden;">CIAP</span>
<span id="t45" class="t" style="top:437px;color:#000000;letter-spacing:-0.125px;left:97px;width:61px;overflow:hidden;">004</span>
<span id="t46" class="t" style="top:437px;color:#000000;letter-spacing:-0.549px;left:164px;width:127px;overflow:hidden;">TRATA FATOR REMESSA</span>
<span id="t47" class="t" style="top:437px;color:#000000;letter-spacing:-0.880px;left:297px;width:127px;overflow:hidden;">FECHAMENTO</span>
<span id="t48" class="t" style="top:453px;color:#000000;letter-spacing:-0.422px;left:30px;width:61px;overflow:hidden;">CIAP</span>
<span id="t49" class="t" style="top:453px;color:#000000;letter-spacing:-0.125px;left:97px;width:61px;overflow:hidden;">005</span>
<span id="t50" class="t" style="top:453px;color:#000000;letter-spacing:-0.730px;left:164px;width:127px;overflow:hidden;">TRATAMENTO DE VENDAS</span>
<span id="t51" class="t" style="top:453px;color:#000000;letter-spacing:-0.793px;left:297px;width:127px;overflow:hidden;">VALORES ACUMULADOS</span>
<div style="left:447px;top:53px;width:454px;height:1px;background:#808080;"></div>
<div style="left:447px;top:53px;width:1px;height:418px;background:#808080;"></div>
<div style="left:448px;top:54px;width:452px;height:1px;background:#FFFFFF;"></div>
<div style="left:448px;top:54px;width:1px;height:416px;background:#FFFFFF;"></div>
<div style="left:448px;top:469px;width:452px;height:1px;background:#808080;"></div>
<div style="left:899px;top:54px;width:1px;height:416px;background:#808080;"></div>
<div style="left:447px;top:470px;width:454px;height:1px;background:#FFFFFF;"></div>
<div style="left:900px;top:53px;width:1px;height:418px;background:#FFFFFF;"></div>
<div style="left:458px;top:60px;width:20px;height:20px;background:#C0C0C0;"></div>
<div style="left:485px;top:60px;width:20px;height:20px;background:#C0C0C0;"></div>
<div style="left:512px;top:60px;width:20px;height:20px;background:#C0C0C0;"></div>
<div style="left:539px;top:59px;width:1px;height:22px;background:#808080;"></div>
<div style="left:540px;top:59px;width:1px;height:22px;background:#FFFFFF;"></div>
<svg style="left:458px;top:60px" width="20" height="20" viewBox="0 0 20 20" shape-rendering="crispEdges"><rect x="7" y="17" width="11" height="1" fill="#808080"/><rect x="17" y="7" width="1" height="10" fill="#808080"/><polygon points="6,8 10,8 10,3 14,3 17,6 17,17 6,17" fill="#fff"/><rect x="5" y="8" width="1" height="9" fill="#000"/><rect x="5" y="16" width="12" height="1" fill="#000"/><rect x="16" y="6" width="1" height="11" fill="#000"/><rect x="10" y="2" width="4" height="1" fill="#000"/><rect x="13" y="3" width="1" height="3" fill="#000"/><rect x="13" y="5" width="3" height="1" fill="#000"/><rect x="14" y="3" width="1" height="1" fill="#000"/><rect x="15" y="4" width="1" height="1" fill="#000"/><rect x="16" y="5" width="1" height="1" fill="#000"/><rect x="9" y="7" width="2" height="1" fill="#000"/><rect x="7" y="9" width="7" height="1" fill="#000"/><rect x="7" y="11" width="7" height="1" fill="#000"/><rect x="7" y="13" width="7" height="1" fill="#000"/><rect x="2" y="2" width="1" height="1" fill="#FFFF00"/><rect x="3" y="3" width="1" height="1" fill="#FFFF00"/><rect x="4" y="4" width="1" height="1" fill="#FFFF00"/><rect x="5" y="5" width="1" height="1" fill="#FFFF00"/><rect x="6" y="6" width="1" height="1" fill="#FFFF00"/><rect x="6" y="2" width="1" height="1" fill="#FFFF00"/><rect x="9" y="3" width="1" height="1" fill="#FFFF00"/><rect x="8" y="4" width="1" height="1" fill="#FFFF00"/><rect x="3" y="5" width="1" height="1" fill="#FFFF00"/><rect x="4" y="5" width="1" height="1" fill="#FFFF00"/><rect x="7" y="6" width="1" height="1" fill="#FFFF00"/><rect x="6" y="8" width="1" height="1" fill="#FFFF00"/><rect x="2" y="8" width="1" height="1" fill="#808080"/></svg>
<svg style="left:485px;top:60px" width="20" height="20" viewBox="0 0 20 20" shape-rendering="crispEdges"><rect x="2" y="17" width="11" height="1" fill="#808080"/><rect x="13" y="12" width="1" height="6" fill="#808080"/><polygon points="1,2 8,2 11,5 12,5 12,16 1,16" fill="#fff"/><rect x="0" y="1" width="1" height="16" fill="#000"/><rect x="0" y="1" width="8" height="1" fill="#000"/><rect x="0" y="16" width="13" height="1" fill="#000"/><rect x="12" y="10" width="1" height="7" fill="#000"/><rect x="8" y="2" width="1" height="3" fill="#000"/><rect x="8" y="4" width="3" height="1" fill="#000"/><rect x="9" y="2" width="1" height="1" fill="#000"/><rect x="10" y="3" width="1" height="1" fill="#000"/><rect x="11" y="4" width="1" height="1" fill="#000"/><rect x="2" y="4" width="5" height="1" fill="#000"/><rect x="2" y="6" width="5" height="1" fill="#000"/><rect x="2" y="8" width="4" height="1" fill="#000"/><rect x="2" y="10" width="4" height="1" fill="#000"/><rect x="2" y="12" width="4" height="1" fill="#000"/><rect x="2" y="14" width="4" height="1" fill="#000"/><polygon points="6,12.5 9,15.5 18.5,6 15.5,3" fill="#FFFF00" stroke="#000" stroke-width="1" shape-rendering="auto"/><polygon points="15.5,3 18.5,6 19.8,4.6 19.8,2.6 18.4,1.4 16.8,1.4" fill="#C0C000" stroke="#000" stroke-width="1" shape-rendering="auto"/><polygon points="5,16.5 6,12.5 9,15.5" fill="#000" shape-rendering="auto"/></svg>
<svg style="left:512px;top:60px" width="20" height="20" viewBox="0 0 20 20"><polygon points="3,3 5.4,3 15.1,13.5 14.4,14.2 3,5" fill="#000" transform="translate(0.3,1)"/><polygon points="15.5,3.1 16.1,3.8 5.8,15.2 3.7,15.5 3,13.8" fill="#000" transform="translate(0.6,0.9)"/><polygon points="3,3 5.4,3 15.1,13.5 14.4,14.2 3,5" fill="#FF0000"/><polygon points="15.5,3.1 16.1,3.8 5.8,15.2 3.7,15.5 3,13.8" fill="#FF0000"/><rect x="14.6" y="16.4" width="1.4" height="1.2" fill="#000"/><rect x="14.4" y="15.4" width="1.4" height="1.3" fill="#FF0000"/></svg>
<svg style="left:549px;top:62px" width="17" height="17" viewBox="0 0 17 17" shape-rendering="crispEdges"><rect x="3" y="15" width="13" height="1" fill="#fff"/><rect x="15" y="1" width="1" height="15" fill="#fff"/><rect x="0" y="0" width="15" height="1" fill="#808080"/><rect x="0" y="0" width="1" height="13" fill="#808080"/><rect x="13" y="0" width="2" height="15" fill="#808080"/><rect x="1" y="13" width="14" height="1" fill="#808080"/><rect x="2" y="14" width="13" height="1" fill="#808080"/><rect x="3" y="1" width="8" height="6" fill="#fff"/><rect x="2" y="0" width="1" height="8" fill="#808080"/><rect x="11" y="0" width="1" height="8" fill="#808080"/><rect x="2" y="7" width="10" height="1" fill="#808080"/><rect x="4" y="2" width="6" height="1" fill="#808080"/><rect x="4" y="4" width="5" height="1" fill="#808080"/><rect x="12" y="1" width="1" height="1" fill="#fff"/><rect x="3" y="9" width="9" height="1" fill="#808080"/><rect x="3" y="9" width="1" height="4" fill="#808080"/><rect x="11" y="9" width="1" height="4" fill="#808080"/><rect x="8" y="10" width="1" height="3" fill="#808080"/></svg>
<svg style="left:577px;top:64px" width="16" height="12" viewBox="0 0 16 12"><path d="M5.5 4.5 L7.5 2.5 L10.5 2.5 Q12.5 2.5 12.5 4.5 L12.5 6 Q12.5 7.5 11 8 L10 8.5" stroke="#fff" stroke-width="1" fill="none" transform="translate(1,1)"/><polygon points="1,3 1,8 6,8" fill="#fff" transform="translate(1,1)"/><path d="M5.5 4.5 L7.5 2.5 L10.5 2.5 Q12.5 2.5 12.5 4.5 L12.5 6 Q12.5 7.5 11 8 L10 8.5" stroke="#808080" stroke-width="1" fill="none"/><polygon points="1,3 1,8 6,8" fill="#808080"/></svg>
<div style="left:477px;top:93px;width:45px;height:21px;background:#D4D0C8;"></div>
<div style="left:477px;top:95px;width:1px;height:19px;background:#FFFFFF;"></div>
<div style="left:478px;top:94px;width:1px;height:1px;background:#FFFFFF;"></div>
<div style="left:479px;top:93px;width:41px;height:1px;background:#FFFFFF;"></div>
<div style="left:520px;top:95px;width:1px;height:19px;background:#808080;"></div>
<div style="left:521px;top:95px;width:1px;height:19px;background:#000000;"></div>
<div style="left:520px;top:94px;width:1px;height:1px;background:#000000;"></div>
<span id="t52" class="t" style="top:98px;color:#808080;letter-spacing:0.068px;left:486px;">Ajuste</span>
<div style="left:522px;top:93px;width:72px;height:21px;background:#D4D0C8;"></div>
<div style="left:522px;top:95px;width:1px;height:19px;background:#FFFFFF;"></div>
<div style="left:523px;top:94px;width:1px;height:1px;background:#FFFFFF;"></div>
<div style="left:524px;top:93px;width:68px;height:1px;background:#FFFFFF;"></div>
<div style="left:592px;top:95px;width:1px;height:19px;background:#808080;"></div>
<div style="left:593px;top:95px;width:1px;height:19px;background:#000000;"></div>
<div style="left:592px;top:94px;width:1px;height:1px;background:#000000;"></div>
<span id="t53" class="t" style="top:98px;color:#808080;letter-spacing:-0.134px;left:528px;">Observação</span>
<div style="left:594px;top:93px;width:69px;height:21px;background:#D4D0C8;"></div>
<div style="left:594px;top:95px;width:1px;height:19px;background:#FFFFFF;"></div>
<div style="left:595px;top:94px;width:1px;height:1px;background:#FFFFFF;"></div>
<div style="left:596px;top:93px;width:65px;height:1px;background:#FFFFFF;"></div>
<div style="left:661px;top:95px;width:1px;height:19px;background:#808080;"></div>
<div style="left:662px;top:95px;width:1px;height:19px;background:#000000;"></div>
<div style="left:661px;top:94px;width:1px;height:1px;background:#000000;"></div>
<span id="t54" class="t" style="top:98px;color:#808080;letter-spacing:-0.591px;left:600px;">NCM X Filial</span>
<div style="left:663px;top:93px;width:72px;height:21px;background:#D4D0C8;"></div>
<div style="left:663px;top:95px;width:1px;height:19px;background:#FFFFFF;"></div>
<div style="left:664px;top:94px;width:1px;height:1px;background:#FFFFFF;"></div>
<div style="left:665px;top:93px;width:68px;height:1px;background:#FFFFFF;"></div>
<div style="left:733px;top:95px;width:1px;height:19px;background:#808080;"></div>
<div style="left:734px;top:95px;width:1px;height:19px;background:#000000;"></div>
<div style="left:733px;top:94px;width:1px;height:1px;background:#000000;"></div>
<span id="t55" class="t" style="top:98px;color:#808080;letter-spacing:-0.429px;left:670px;">CFOP x Filial</span>
<div style="left:735px;top:93px;width:49px;height:21px;background:#D4D0C8;"></div>
<div style="left:735px;top:95px;width:1px;height:19px;background:#FFFFFF;"></div>
<div style="left:736px;top:94px;width:1px;height:1px;background:#FFFFFF;"></div>
<div style="left:737px;top:93px;width:45px;height:1px;background:#FFFFFF;"></div>
<div style="left:782px;top:95px;width:1px;height:19px;background:#808080;"></div>
<div style="left:783px;top:95px;width:1px;height:19px;background:#000000;"></div>
<div style="left:782px;top:94px;width:1px;height:1px;background:#000000;"></div>
<span id="t56" class="t" style="top:98px;color:#808080;letter-spacing:-0.241px;left:743px;">Serviço</span>
<div style="left:467px;top:113px;width:53px;height:23px;background:#D4D0C8;"></div>
<div style="left:467px;top:115px;width:1px;height:21px;background:#FFFFFF;"></div>
<div style="left:468px;top:114px;width:1px;height:1px;background:#FFFFFF;"></div>
<div style="left:469px;top:113px;width:49px;height:1px;background:#FFFFFF;"></div>
<div style="left:518px;top:115px;width:1px;height:21px;background:#808080;"></div>
<div style="left:519px;top:115px;width:1px;height:21px;background:#000000;"></div>
<div style="left:518px;top:114px;width:1px;height:1px;background:#000000;"></div>
<span id="t57" class="t" style="top:118px;color:#808080;letter-spacing:-0.246px;left:475px;">Parceiro</span>
<div style="left:520px;top:113px;width:65px;height:23px;background:#D4D0C8;"></div>
<div style="left:520px;top:115px;width:1px;height:21px;background:#FFFFFF;"></div>
<div style="left:521px;top:114px;width:1px;height:1px;background:#FFFFFF;"></div>
<div style="left:522px;top:113px;width:61px;height:1px;background:#FFFFFF;"></div>
<div style="left:583px;top:115px;width:1px;height:21px;background:#808080;"></div>
<div style="left:584px;top:115px;width:1px;height:21px;background:#000000;"></div>
<div style="left:583px;top:114px;width:1px;height:1px;background:#000000;"></div>
<span id="t58" class="t" style="top:118px;color:#808080;letter-spacing:-0.303px;left:529px;">Tipo de NF</span>
<div style="left:585px;top:113px;width:85px;height:23px;background:#D4D0C8;"></div>
<div style="left:585px;top:115px;width:1px;height:21px;background:#FFFFFF;"></div>
<div style="left:586px;top:114px;width:1px;height:1px;background:#FFFFFF;"></div>
<div style="left:587px;top:113px;width:81px;height:1px;background:#FFFFFF;"></div>
<div style="left:668px;top:115px;width:1px;height:21px;background:#808080;"></div>
<div style="left:669px;top:115px;width:1px;height:21px;background:#000000;"></div>
<div style="left:668px;top:114px;width:1px;height:1px;background:#000000;"></div>
<span id="t59" class="t" style="top:118px;color:#808080;letter-spacing:-0.129px;left:593px;">Conta Contábil</span>
<div style="left:670px;top:113px;width:94px;height:23px;background:#D4D0C8;"></div>
<div style="left:670px;top:115px;width:1px;height:21px;background:#FFFFFF;"></div>
<div style="left:671px;top:114px;width:1px;height:1px;background:#FFFFFF;"></div>
<div style="left:672px;top:113px;width:90px;height:1px;background:#FFFFFF;"></div>
<div style="left:762px;top:115px;width:1px;height:21px;background:#808080;"></div>
<div style="left:763px;top:115px;width:1px;height:21px;background:#000000;"></div>
<div style="left:762px;top:114px;width:1px;height:1px;background:#000000;"></div>
<span id="t60" class="t" style="top:118px;color:#808080;letter-spacing:-0.123px;left:676px;">Contas Relatório</span>
<div style="left:764px;top:113px;width:31px;height:23px;background:#D4D0C8;"></div>
<div style="left:764px;top:115px;width:1px;height:21px;background:#FFFFFF;"></div>
<div style="left:765px;top:114px;width:1px;height:1px;background:#FFFFFF;"></div>
<div style="left:766px;top:113px;width:27px;height:1px;background:#FFFFFF;"></div>
<div style="left:793px;top:115px;width:1px;height:21px;background:#808080;"></div>
<div style="left:794px;top:115px;width:1px;height:21px;background:#000000;"></div>
<div style="left:793px;top:114px;width:1px;height:1px;background:#000000;"></div>
<span id="t61" class="t" style="top:118px;color:#808080;letter-spacing:0.021px;left:772px;">IVA</span>
<div style="left:455px;top:136px;width:440px;height:1px;background:#FFFFFF;"></div>
<div style="left:795px;top:113px;width:53px;height:24px;background:#D4D0C8;"></div>
<div style="left:795px;top:115px;width:1px;height:22px;background:#FFFFFF;"></div>
<div style="left:796px;top:114px;width:1px;height:1px;background:#FFFFFF;"></div>
<div style="left:797px;top:113px;width:49px;height:1px;background:#FFFFFF;"></div>
<div style="left:846px;top:115px;width:1px;height:22px;background:#808080;"></div>
<div style="left:847px;top:115px;width:1px;height:22px;background:#000000;"></div>
<div style="left:846px;top:114px;width:1px;height:1px;background:#000000;"></div>
<span id="t62" class="t" style="top:118px;color:#808080;letter-spacing:-0.022px;left:803px;">Imposto</span>
<div style="left:848px;top:116px;width:47px;height:1px;background:#FFFFFF;"></div>
<div style="left:457px;top:133px;width:52px;height:18px;background:#D4D0C8;"></div>
<div style="left:457px;top:135px;width:1px;height:16px;background:#FFFFFF;"></div>
<div style="left:458px;top:134px;width:1px;height:1px;background:#FFFFFF;"></div>
<div style="left:459px;top:133px;width:48px;height:1px;background:#FFFFFF;"></div>
<div style="left:507px;top:135px;width:1px;height:16px;background:#808080;"></div>
<div style="left:508px;top:135px;width:1px;height:16px;background:#000000;"></div>
<div style="left:507px;top:134px;width:1px;height:1px;background:#000000;"></div>
<span id="t63" class="t" style="top:138px;color:#808080;letter-spacing:-0.080px;left:463px;">Produto</span>
<div style="left:510px;top:133px;width:40px;height:18px;background:#D4D0C8;"></div>
<div style="left:510px;top:135px;width:1px;height:16px;background:#FFFFFF;"></div>
<div style="left:511px;top:134px;width:1px;height:1px;background:#FFFFFF;"></div>
<div style="left:512px;top:133px;width:36px;height:1px;background:#FFFFFF;"></div>
<div style="left:548px;top:135px;width:1px;height:16px;background:#808080;"></div>
<div style="left:549px;top:135px;width:1px;height:16px;background:#000000;"></div>
<div style="left:548px;top:134px;width:1px;height:1px;background:#000000;"></div>
<span id="t64" class="t" style="top:138px;color:#000000;letter-spacing:-0.891px;left:517px;">CFOP</span>
<div style="left:551px;top:133px;width:26px;height:18px;background:#D4D0C8;"></div>
<div style="left:551px;top:135px;width:1px;height:16px;background:#FFFFFF;"></div>
<div style="left:552px;top:134px;width:1px;height:1px;background:#FFFFFF;"></div>
<div style="left:553px;top:133px;width:22px;height:1px;background:#FFFFFF;"></div>
<div style="left:575px;top:135px;width:1px;height:16px;background:#808080;"></div>
<div style="left:576px;top:135px;width:1px;height:16px;background:#000000;"></div>
<div style="left:575px;top:134px;width:1px;height:1px;background:#000000;"></div>
<span id="t65" class="t" style="top:138px;color:#808080;letter-spacing:-0.828px;left:558px;">UF</span>
<div style="left:578px;top:133px;width:76px;height:18px;background:#D4D0C8;"></div>
<div style="left:578px;top:135px;width:1px;height:16px;background:#FFFFFF;"></div>
<div style="left:579px;top:134px;width:1px;height:1px;background:#FFFFFF;"></div>
<div style="left:580px;top:133px;width:72px;height:1px;background:#FFFFFF;"></div>
<div style="left:652px;top:135px;width:1px;height:16px;background:#808080;"></div>
<div style="left:653px;top:135px;width:1px;height:16px;background:#000000;"></div>
<div style="left:652px;top:134px;width:1px;height:1px;background:#000000;"></div>
<span id="t66" class="t" style="top:138px;color:#808080;left:584px;">Sit.Tributária</span>
<div style="left:695px;top:133px;width:33px;height:18px;background:#D4D0C8;"></div>
<div style="left:695px;top:135px;width:1px;height:16px;background:#FFFFFF;"></div>
<div style="left:696px;top:134px;width:1px;height:1px;background:#FFFFFF;"></div>
<div style="left:697px;top:133px;width:29px;height:1px;background:#FFFFFF;"></div>
<div style="left:726px;top:135px;width:1px;height:16px;background:#808080;"></div>
<div style="left:727px;top:135px;width:1px;height:16px;background:#000000;"></div>
<div style="left:726px;top:134px;width:1px;height:1px;background:#000000;"></div>
<span id="t67" class="t" style="top:138px;color:#808080;letter-spacing:-1.010px;left:697px;">NCM</span>
<div style="left:455px;top:151px;width:432px;height:1px;background:#FFFFFF;"></div>
<div style="left:455px;top:151px;width:1px;height:320px;background:#FFFFFF;"></div>
<div style="left:886px;top:152px;width:1px;height:319px;background:#808080;"></div>
<div style="left:887px;top:151px;width:1px;height:320px;background:#000000;"></div>
<div style="left:651px;top:131px;width:43px;height:22px;background:#D4D0C8;"></div>
<div style="left:651px;top:133px;width:1px;height:20px;background:#FFFFFF;"></div>
<div style="left:652px;top:132px;width:1px;height:1px;background:#FFFFFF;"></div>
<div style="left:653px;top:131px;width:39px;height:1px;background:#FFFFFF;"></div>
<div style="left:692px;top:133px;width:1px;height:20px;background:#808080;"></div>
<div style="left:693px;top:133px;width:1px;height:20px;background:#000000;"></div>
<div style="left:692px;top:132px;width:1px;height:1px;background:#000000;"></div>
<span id="t68" class="t" style="top:137px;color:#000000;letter-spacing:-0.442px;left:661px;">Filiais</span>
<div style="left:457px;top:162px;width:404px;height:1px;background:#808080;"></div>
<div style="left:457px;top:162px;width:1px;height:135px;background:#808080;"></div>
<div style="left:458px;top:163px;width:402px;height:1px;background:#FFFFFF;"></div>
<div style="left:458px;top:163px;width:1px;height:133px;background:#FFFFFF;"></div>
<div style="left:458px;top:295px;width:402px;height:1px;background:#808080;"></div>
<div style="left:859px;top:163px;width:1px;height:133px;background:#808080;"></div>
<div style="left:457px;top:296px;width:404px;height:1px;background:#FFFFFF;"></div>
<div style="left:860px;top:162px;width:1px;height:135px;background:#FFFFFF;"></div>
<span id="t69" class="t" style="top:172px;color:#000000;letter-spacing:-0.156px;left:465px;">Matriz</span>
<span id="t70" class="t" style="top:195px;color:#000000;letter-spacing:-0.432px;left:465px;">Filial</span>
<div style="left:505px;top:168px;width:61px;height:21px;background:#FFFFFF;"></div>
<div style="left:505px;top:168px;width:61px;height:1px;background:#808080;"></div>
<div style="left:505px;top:168px;width:1px;height:21px;background:#808080;"></div>
<div style="left:506px;top:169px;width:59px;height:1px;background:#404040;"></div>
<div style="left:506px;top:169px;width:1px;height:19px;background:#404040;"></div>
<div style="left:505px;top:188px;width:61px;height:1px;background:#FFFFFF;"></div>
<div style="left:565px;top:168px;width:1px;height:21px;background:#FFFFFF;"></div>
<div style="left:506px;top:187px;width:59px;height:1px;background:#D4D0C8;"></div>
<div style="left:564px;top:169px;width:1px;height:19px;background:#D4D0C8;"></div>
<span id="t71" class="t" style="top:172px;color:#808080;letter-spacing:-0.948px;left:507px;">ROB</span>
<div style="left:567px;top:168px;width:262px;height:21px;background:#FFFFFF;"></div>
<div style="left:567px;top:168px;width:262px;height:1px;background:#808080;"></div>
<div style="left:567px;top:168px;width:1px;height:21px;background:#808080;"></div>
<div style="left:568px;top:169px;width:260px;height:1px;background:#404040;"></div>
<div style="left:568px;top:169px;width:1px;height:19px;background:#404040;"></div>
<div style="left:567px;top:188px;width:262px;height:1px;background:#FFFFFF;"></div>
<div style="left:828px;top:168px;width:1px;height:21px;background:#FFFFFF;"></div>
<div style="left:568px;top:187px;width:260px;height:1px;background:#D4D0C8;"></div>
<div style="left:827px;top:169px;width:1px;height:19px;background:#D4D0C8;"></div>
<span id="t72" class="t" style="top:172px;color:#808080;letter-spacing:-0.619px;left:569px;">ROBERTO S/A</span>
<div style="left:505px;top:191px;width:61px;height:21px;background:#FFFFFF;"></div>
<div style="left:505px;top:191px;width:61px;height:1px;background:#808080;"></div>
<div style="left:505px;top:191px;width:1px;height:21px;background:#808080;"></div>
<div style="left:506px;top:192px;width:59px;height:1px;background:#404040;"></div>
<div style="left:506px;top:192px;width:1px;height:19px;background:#404040;"></div>
<div style="left:505px;top:211px;width:61px;height:1px;background:#FFFFFF;"></div>
<div style="left:565px;top:191px;width:1px;height:21px;background:#FFFFFF;"></div>
<div style="left:506px;top:210px;width:59px;height:1px;background:#D4D0C8;"></div>
<div style="left:564px;top:192px;width:1px;height:19px;background:#D4D0C8;"></div>
<span id="t73" class="t" style="top:195px;color:#808080;letter-spacing:-1.208px;left:507px;">RKK</span>
<div style="left:567px;top:191px;width:262px;height:21px;background:#FFFFFF;"></div>
<div style="left:567px;top:191px;width:262px;height:1px;background:#808080;"></div>
<div style="left:567px;top:191px;width:1px;height:21px;background:#808080;"></div>
<div style="left:568px;top:192px;width:260px;height:1px;background:#404040;"></div>
<div style="left:568px;top:192px;width:1px;height:19px;background:#404040;"></div>
<div style="left:567px;top:211px;width:262px;height:1px;background:#FFFFFF;"></div>
<div style="left:828px;top:191px;width:1px;height:21px;background:#FFFFFF;"></div>
<div style="left:568px;top:210px;width:260px;height:1px;background:#D4D0C8;"></div>
<div style="left:827px;top:192px;width:1px;height:19px;background:#D4D0C8;"></div>
<span id="t74" class="t" style="top:195px;color:#808080;letter-spacing:-0.535px;left:569px;">KIAN COMERCIO LTDA</span>
<div style="left:831px;top:168px;width:22px;height:21px;background:#D4D0C8;"></div>
<div style="left:831px;top:168px;width:21px;height:1px;background:#FFFFFF;"></div>
<div style="left:831px;top:168px;width:1px;height:20px;background:#FFFFFF;"></div>
<div style="left:831px;top:188px;width:22px;height:1px;background:#404040;"></div>
<div style="left:852px;top:168px;width:1px;height:21px;background:#404040;"></div>
<div style="left:832px;top:187px;width:20px;height:1px;background:#808080;"></div>
<div style="left:851px;top:169px;width:1px;height:19px;background:#808080;"></div>
<span id="t75" class="t" style="top:171px;color:#000000;font-size:12px;font-weight:bold;left:838px;">?</span>
<div style="left:831px;top:190px;width:22px;height:21px;background:#D4D0C8;"></div>
<div style="left:831px;top:190px;width:21px;height:1px;background:#FFFFFF;"></div>
<div style="left:831px;top:190px;width:1px;height:20px;background:#FFFFFF;"></div>
<div style="left:831px;top:210px;width:22px;height:1px;background:#404040;"></div>
<div style="left:852px;top:190px;width:1px;height:21px;background:#404040;"></div>
<div style="left:832px;top:209px;width:20px;height:1px;background:#808080;"></div>
<div style="left:851px;top:191px;width:1px;height:19px;background:#808080;"></div>
<span id="t76" class="t" style="top:193px;color:#000000;font-size:12px;font-weight:bold;left:838px;">?</span>
<span id="t77" class="t" style="top:253px;color:#000000;letter-spacing:0.098px;left:470px;">Contrato</span>
<span id="t78" class="t" style="top:253px;color:#000000;letter-spacing:-0.080px;left:564px;">Percent. de Recuperação</span>
<span id="t79" class="t" style="top:253px;color:#000000;letter-spacing:-0.414px;left:709px;">UFIR</span>
<div style="left:470px;top:268px;width:88px;height:21px;background:#FFFFFF;"></div>
<div style="left:470px;top:268px;width:88px;height:1px;background:#808080;"></div>
<div style="left:470px;top:268px;width:1px;height:21px;background:#808080;"></div>
<div style="left:471px;top:269px;width:86px;height:1px;background:#404040;"></div>
<div style="left:471px;top:269px;width:1px;height:19px;background:#404040;"></div>
<div style="left:470px;top:288px;width:88px;height:1px;background:#FFFFFF;"></div>
<div style="left:557px;top:268px;width:1px;height:21px;background:#FFFFFF;"></div>
<div style="left:471px;top:287px;width:86px;height:1px;background:#D4D0C8;"></div>
<div style="left:556px;top:269px;width:1px;height:19px;background:#D4D0C8;"></div>
<div style="left:471px;top:269px;width:86px;height:1px;background:#000000;"></div>
<div style="left:471px;top:269px;width:1px;height:19px;background:#000000;"></div>
<span id="t80" class="t" style="top:272px;color:#808080;letter-spacing:0.087px;left:474px;">30/06/2006</span>
<div style="left:564px;top:268px;width:139px;height:21px;background:#FFFFFF;"></div>
<div style="left:564px;top:268px;width:139px;height:1px;background:#808080;"></div>
<div style="left:564px;top:268px;width:1px;height:21px;background:#808080;"></div>
<div style="left:565px;top:269px;width:137px;height:1px;background:#404040;"></div>
<div style="left:565px;top:269px;width:1px;height:19px;background:#404040;"></div>
<div style="left:564px;top:288px;width:139px;height:1px;background:#FFFFFF;"></div>
<div style="left:702px;top:268px;width:1px;height:21px;background:#FFFFFF;"></div>
<div style="left:565px;top:287px;width:137px;height:1px;background:#D4D0C8;"></div>
<div style="left:701px;top:269px;width:1px;height:19px;background:#D4D0C8;"></div>
<div style="left:565px;top:269px;width:137px;height:1px;background:#000000;"></div>
<div style="left:565px;top:269px;width:1px;height:19px;background:#000000;"></div>
<span id="t81" class="t" style="top:272px;color:#808080;letter-spacing:-0.113px;right:196.61px;">0,000</span>
<div style="left:709px;top:268px;width:88px;height:21px;background:#FFFFFF;"></div>
<div style="left:709px;top:268px;width:88px;height:1px;background:#808080;"></div>
<div style="left:709px;top:268px;width:1px;height:21px;background:#808080;"></div>
<div style="left:710px;top:269px;width:86px;height:1px;background:#404040;"></div>
<div style="left:710px;top:269px;width:1px;height:19px;background:#404040;"></div>
<div style="left:709px;top:288px;width:88px;height:1px;background:#FFFFFF;"></div>
<div style="left:796px;top:268px;width:1px;height:21px;background:#FFFFFF;"></div>
<div style="left:710px;top:287px;width:86px;height:1px;background:#D4D0C8;"></div>
<div style="left:795px;top:269px;width:1px;height:19px;background:#D4D0C8;"></div>
<div style="left:710px;top:269px;width:86px;height:1px;background:#000000;"></div>
<div style="left:710px;top:269px;width:1px;height:19px;background:#000000;"></div>
<span id="t82" class="t" style="top:272px;color:#808080;letter-spacing:-0.113px;right:103.11px;">0,000</span>
<div style="left:458px;top:297px;width:402px;height:1px;background:#808080;"></div>
<div style="left:458px;top:297px;width:1px;height:174px;background:#808080;"></div>
<div style="left:459px;top:298px;width:401px;height:170px;background:#FFFFFF;"></div>
<div style="left:459px;top:298px;width:19px;height:17px;background:#D4D0C8;"></div>
<div style="left:459px;top:298px;width:19px;height:1px;background:#FFFFFF;"></div>
<div style="left:459px;top:298px;width:1px;height:17px;background:#FFFFFF;"></div>
<div style="left:459px;top:314px;width:19px;height:1px;background:#808080;"></div>
<div style="left:477px;top:298px;width:1px;height:17px;background:#808080;"></div>
<div style="left:479px;top:298px;width:66px;height:17px;background:#D4D0C8;"></div>
<div style="left:479px;top:298px;width:66px;height:1px;background:#FFFFFF;"></div>
<div style="left:479px;top:298px;width:1px;height:17px;background:#FFFFFF;"></div>
<div style="left:479px;top:314px;width:66px;height:1px;background:#808080;"></div>
<div style="left:544px;top:298px;width:1px;height:17px;background:#808080;"></div>
<div style="left:546px;top:298px;width:66px;height:17px;background:#D4D0C8;"></div>
<div style="left:546px;top:298px;width:66px;height:1px;background:#FFFFFF;"></div>
<div style="left:546px;top:298px;width:1px;height:17px;background:#FFFFFF;"></div>
<div style="left:546px;top:314px;width:66px;height:1px;background:#808080;"></div>
<div style="left:611px;top:298px;width:1px;height:17px;background:#808080;"></div>
<div style="left:613px;top:298px;width:52px;height:17px;background:#D4D0C8;"></div>
<div style="left:613px;top:298px;width:52px;height:1px;background:#FFFFFF;"></div>
<div style="left:613px;top:298px;width:1px;height:17px;background:#FFFFFF;"></div>
<div style="left:613px;top:314px;width:52px;height:1px;background:#808080;"></div>
<div style="left:664px;top:298px;width:1px;height:17px;background:#808080;"></div>
<div style="left:666px;top:298px;width:52px;height:17px;background:#D4D0C8;"></div>
<div style="left:666px;top:298px;width:52px;height:1px;background:#FFFFFF;"></div>
<div style="left:666px;top:298px;width:1px;height:17px;background:#FFFFFF;"></div>
<div style="left:666px;top:314px;width:52px;height:1px;background:#808080;"></div>
<div style="left:717px;top:298px;width:1px;height:17px;background:#808080;"></div>
<div style="left:719px;top:298px;width:66px;height:17px;background:#D4D0C8;"></div>
<div style="left:719px;top:298px;width:66px;height:1px;background:#FFFFFF;"></div>
<div style="left:719px;top:298px;width:1px;height:17px;background:#FFFFFF;"></div>
<div style="left:719px;top:314px;width:66px;height:1px;background:#808080;"></div>
<div style="left:784px;top:298px;width:1px;height:17px;background:#808080;"></div>
<div style="left:786px;top:298px;width:72px;height:17px;background:#D4D0C8;"></div>
<div style="left:786px;top:298px;width:72px;height:1px;background:#FFFFFF;"></div>
<div style="left:786px;top:298px;width:1px;height:17px;background:#FFFFFF;"></div>
<div style="left:786px;top:314px;width:72px;height:1px;background:#808080;"></div>
<div style="left:857px;top:298px;width:1px;height:17px;background:#808080;"></div>
<div style="left:459px;top:315px;width:400px;height:1px;background:#707070;"></div>
<div style="left:459px;top:331px;width:400px;height:1px;background:#808080;"></div>
<div style="left:459px;top:347px;width:400px;height:1px;background:#808080;"></div>
<div style="left:459px;top:363px;width:400px;height:1px;background:#808080;"></div>
<div style="left:459px;top:379px;width:400px;height:1px;background:#808080;"></div>
<div style="left:459px;top:395px;width:400px;height:1px;background:#808080;"></div>
<div style="left:459px;top:411px;width:400px;height:1px;background:#808080;"></div>
<div style="left:459px;top:427px;width:400px;height:1px;background:#808080;"></div>
<div style="left:459px;top:443px;width:400px;height:1px;background:#808080;"></div>
<div style="left:459px;top:459px;width:400px;height:1px;background:#808080;"></div>
<div style="left:478px;top:298px;width:1px;height:173px;background:#808080;"></div>
<div style="left:545px;top:298px;width:1px;height:173px;background:#808080;"></div>
<div style="left:612px;top:298px;width:1px;height:173px;background:#808080;"></div>
<div style="left:665px;top:298px;width:1px;height:173px;background:#808080;"></div>
<div style="left:718px;top:298px;width:1px;height:173px;background:#808080;"></div>
<div style="left:785px;top:298px;width:1px;height:173px;background:#808080;"></div>
<div style="left:858px;top:298px;width:1px;height:173px;background:#808080;"></div>
<div style="left:478px;top:298px;width:1px;height:173px;background:#707070;"></div>
<div style="left:459px;top:316px;width:19px;height:15px;background:#D4D0C8;"></div>
<div style="left:459px;top:316px;width:19px;height:1px;background:#FFFFFF;"></div>
<div style="left:459px;top:316px;width:1px;height:15px;background:#FFFFFF;"></div>
<div style="left:459px;top:330px;width:19px;height:1px;background:#808080;"></div>
<div style="left:477px;top:316px;width:1px;height:15px;background:#808080;"></div>
<div style="left:459px;top:331px;width:20px;height:1px;background:#707070;"></div>
<div style="left:459px;top:332px;width:19px;height:15px;background:#D4D0C8;"></div>
<div style="left:459px;top:332px;width:19px;height:1px;background:#FFFFFF;"></div>
<div style="left:459px;top:332px;width:1px;height:15px;background:#FFFFFF;"></div>
<div style="left:459px;top:346px;width:19px;height:1px;background:#808080;"></div>
<div style="left:477px;top:332px;width:1px;height:15px;background:#808080;"></div>
<div style="left:459px;top:347px;width:20px;height:1px;background:#707070;"></div>
<div style="left:459px;top:348px;width:19px;height:15px;background:#D4D0C8;"></div>
<div style="left:459px;top:348px;width:19px;height:1px;background:#FFFFFF;"></div>
<div style="left:459px;top:348px;width:1px;height:15px;background:#FFFFFF;"></div>
<div style="left:459px;top:362px;width:19px;height:1px;background:#808080;"></div>
<div style="left:477px;top:348px;width:1px;height:15px;background:#808080;"></div>
<div style="left:459px;top:363px;width:20px;height:1px;background:#707070;"></div>
<div style="left:459px;top:364px;width:19px;height:15px;background:#D4D0C8;"></div>
<div style="left:459px;top:364px;width:19px;height:1px;background:#FFFFFF;"></div>
<div style="left:459px;top:364px;width:1px;height:15px;background:#FFFFFF;"></div>
<div style="left:459px;top:378px;width:19px;height:1px;background:#808080;"></div>
<div style="left:477px;top:364px;width:1px;height:15px;background:#808080;"></div>
<div style="left:459px;top:379px;width:20px;height:1px;background:#707070;"></div>
<div style="left:459px;top:380px;width:19px;height:15px;background:#D4D0C8;"></div>
<div style="left:459px;top:380px;width:19px;height:1px;background:#FFFFFF;"></div>
<div style="left:459px;top:380px;width:1px;height:15px;background:#FFFFFF;"></div>
<div style="left:459px;top:394px;width:19px;height:1px;background:#808080;"></div>
<div style="left:477px;top:380px;width:1px;height:15px;background:#808080;"></div>
<div style="left:459px;top:395px;width:20px;height:1px;background:#707070;"></div>
<div style="left:459px;top:396px;width:19px;height:15px;background:#D4D0C8;"></div>
<div style="left:459px;top:396px;width:19px;height:1px;background:#FFFFFF;"></div>
<div style="left:459px;top:396px;width:1px;height:15px;background:#FFFFFF;"></div>
<div style="left:459px;top:410px;width:19px;height:1px;background:#808080;"></div>
<div style="left:477px;top:396px;width:1px;height:15px;background:#808080;"></div>
<div style="left:459px;top:411px;width:20px;height:1px;background:#707070;"></div>
<div style="left:459px;top:412px;width:19px;height:15px;background:#D4D0C8;"></div>
<div style="left:459px;top:412px;width:19px;height:1px;background:#FFFFFF;"></div>
<div style="left:459px;top:412px;width:1px;height:15px;background:#FFFFFF;"></div>
<div style="left:459px;top:426px;width:19px;height:1px;background:#808080;"></div>
<div style="left:477px;top:412px;width:1px;height:15px;background:#808080;"></div>
<div style="left:459px;top:427px;width:20px;height:1px;background:#707070;"></div>
<div style="left:459px;top:428px;width:19px;height:15px;background:#D4D0C8;"></div>
<div style="left:459px;top:428px;width:19px;height:1px;background:#FFFFFF;"></div>
<div style="left:459px;top:428px;width:1px;height:15px;background:#FFFFFF;"></div>
<div style="left:459px;top:442px;width:19px;height:1px;background:#808080;"></div>
<div style="left:477px;top:428px;width:1px;height:15px;background:#808080;"></div>
<div style="left:459px;top:443px;width:20px;height:1px;background:#707070;"></div>
<div style="left:459px;top:444px;width:19px;height:15px;background:#D4D0C8;"></div>
<div style="left:459px;top:444px;width:19px;height:1px;background:#FFFFFF;"></div>
<div style="left:459px;top:444px;width:1px;height:15px;background:#FFFFFF;"></div>
<div style="left:459px;top:458px;width:19px;height:1px;background:#808080;"></div>
<div style="left:477px;top:444px;width:1px;height:15px;background:#808080;"></div>
<div style="left:459px;top:459px;width:20px;height:1px;background:#707070;"></div>
<span id="t83" class="t" style="top:301px;color:#000000;letter-spacing:-0.319px;left:482px;">Grupo</span>
<span id="t84" class="t" style="top:301px;color:#000000;letter-spacing:-0.250px;left:549px;">Cód.Rel</span>
<span id="t85" class="t" style="top:301px;color:#000000;letter-spacing:-0.156px;left:616px;">Matriz</span>
<span id="t86" class="t" style="top:301px;color:#000000;letter-spacing:-0.432px;left:669px;">Filial</span>
<span id="t87" class="t" style="top:301px;color:#000000;letter-spacing:0.156px;left:722px;">Dt.Contrato</span>
<span id="t88" class="t" style="top:301px;color:#000000;letter-spacing:-0.146px;right:40.15px;">Perc.Rec.</span>
<div style="left:478px;top:411px;width:68px;height:17px;background:#000000;"></div>
<div style="left:479px;top:412px;width:66px;height:15px;background:#FFFFE1;"></div>
<span id="t89" class="t" style="top:318px;color:#000000;letter-spacing:-0.422px;left:481px;">CIAP</span>
<span id="t90" class="t" style="top:318px;color:#000000;letter-spacing:-0.125px;left:548px;">001</span>
<span id="t91" class="t" style="top:318px;color:#000000;letter-spacing:-0.802px;left:615px;">ALN</span>
<span id="t92" class="t" style="top:318px;color:#000000;letter-spacing:-0.125px;left:668px;">002</span>
<span id="t93" class="t" style="top:318px;color:#000000;letter-spacing:0.087px;right:112.91px;">31/12/2005</span>
<span id="t94" class="t" style="top:318px;color:#000000;letter-spacing:0.087px;right:39.91px;">.0000</span>
<span id="t95" class="t" style="top:334px;color:#000000;letter-spacing:-0.422px;left:481px;">CIAP</span>
<span id="t96" class="t" style="top:334px;color:#000000;letter-spacing:-0.125px;left:548px;">001</span>
<span id="t97" class="t" style="top:334px;color:#000000;letter-spacing:-0.854px;left:615px;">JVF</span>
<span id="t98" class="t" style="top:334px;color:#000000;letter-spacing:-0.125px;left:668px;">2</span>
<span id="t99" class="t" style="top:334px;color:#000000;letter-spacing:0.087px;right:112.91px;">30/06/2003</span>
<span id="t100" class="t" style="top:334px;color:#000000;letter-spacing:0.087px;right:39.91px;">.0000</span>
<span id="t101" class="t" style="top:350px;color:#000000;letter-spacing:-0.422px;left:481px;">CIAP</span>
<span id="t102" class="t" style="top:350px;color:#000000;letter-spacing:-0.125px;left:548px;">001</span>
<span id="t103" class="t" style="top:350px;color:#000000;letter-spacing:-0.854px;left:615px;">JVF</span>
<span id="t104" class="t" style="top:350px;color:#000000;letter-spacing:-0.125px;left:668px;">3</span>
<span id="t105" class="t" style="top:350px;color:#000000;letter-spacing:0.087px;right:112.91px;">30/06/2004</span>
<span id="t106" class="t" style="top:350px;color:#000000;letter-spacing:0.087px;right:39.91px;">.0000</span>
<span id="t107" class="t" style="top:366px;color:#000000;letter-spacing:-0.422px;left:481px;">CIAP</span>
<span id="t108" class="t" style="top:366px;color:#000000;letter-spacing:-0.125px;left:548px;">001</span>
<span id="t109" class="t" style="top:366px;color:#000000;letter-spacing:-1.021px;left:615px;">NOG</span>
<span id="t110" class="t" style="top:366px;color:#000000;letter-spacing:-0.125px;left:668px;">0010</span>
<span id="t111" class="t" style="top:366px;color:#000000;letter-spacing:0.087px;right:112.91px;">30/06/2004</span>
<span id="t112" class="t" style="top:366px;color:#000000;letter-spacing:0.087px;right:39.91px;">.0000</span>
<span id="t113" class="t" style="top:382px;color:#000000;letter-spacing:-0.422px;left:481px;">CIAP</span>
<span id="t114" class="t" style="top:382px;color:#000000;letter-spacing:-0.125px;left:548px;">001</span>
<span id="t115" class="t" style="top:382px;color:#000000;letter-spacing:-1.021px;left:615px;">NOG</span>
<span id="t116" class="t" style="top:382px;color:#000000;letter-spacing:-0.125px;left:668px;">0012</span>
<span id="t117" class="t" style="top:382px;color:#000000;letter-spacing:0.087px;right:112.91px;">30/06/2004</span>
<span id="t118" class="t" style="top:382px;color:#000000;letter-spacing:0.087px;right:39.91px;">.0000</span>
<span id="t119" class="t" style="top:398px;color:#000000;letter-spacing:-0.422px;left:481px;">CIAP</span>
<span id="t120" class="t" style="top:398px;color:#000000;letter-spacing:-0.125px;left:548px;">001</span>
<span id="t121" class="t" style="top:398px;color:#000000;letter-spacing:-1.021px;left:615px;">NOG</span>
<span id="t122" class="t" style="top:398px;color:#000000;letter-spacing:-0.125px;left:668px;">003</span>
<span id="t123" class="t" style="top:398px;color:#000000;letter-spacing:0.087px;right:112.91px;">30/06/2004</span>
<span id="t124" class="t" style="top:398px;color:#000000;letter-spacing:0.087px;right:39.91px;">.0000</span>
<span id="t125" class="t" style="top:414px;color:#000000;letter-spacing:-0.422px;left:481px;">CIAP</span>
<span id="t126" class="t" style="top:414px;color:#000000;letter-spacing:-0.125px;left:548px;">001</span>
<span id="t127" class="t" style="top:414px;color:#000000;letter-spacing:-1.021px;left:615px;">NOG</span>
<span id="t128" class="t" style="top:414px;color:#000000;letter-spacing:-0.125px;left:668px;">004</span>
<span id="t129" class="t" style="top:414px;color:#000000;letter-spacing:0.087px;right:112.91px;">30/06/2004</span>
<span id="t130" class="t" style="top:414px;color:#000000;letter-spacing:0.087px;right:39.91px;">.0000</span>
<span id="t131" class="t" style="top:430px;color:#000000;letter-spacing:-0.422px;left:481px;">CIAP</span>
<span id="t132" class="t" style="top:430px;color:#000000;letter-spacing:-0.125px;left:548px;">001</span>
<span id="t133" class="t" style="top:430px;color:#000000;letter-spacing:-0.948px;left:615px;">ROB</span>
<span id="t134" class="t" style="top:430px;color:#000000;letter-spacing:-1.010px;left:668px;">MFM</span>
<span id="t135" class="t" style="top:430px;color:#000000;letter-spacing:0.087px;right:112.91px;">30/06/2004</span>
<span id="t136" class="t" style="top:430px;color:#000000;letter-spacing:0.087px;right:39.91px;">.0000</span>
<span id="t137" class="t" style="top:446px;color:#000000;letter-spacing:-0.422px;left:481px;">CIAP</span>
<span id="t138" class="t" style="top:446px;color:#000000;letter-spacing:-0.125px;left:548px;">001</span>
<span id="t139" class="t" style="top:446px;color:#000000;letter-spacing:-0.948px;left:615px;">ROB</span>
<span id="t140" class="t" style="top:446px;color:#000000;letter-spacing:-1.208px;left:668px;">RKK</span>
<span id="t141" class="t" style="top:446px;color:#000000;letter-spacing:0.087px;right:112.91px;">30/06/2006</span>
<span id="t142" class="t" style="top:446px;color:#000000;letter-spacing:0.087px;right:39.91px;">.0000</span>
<div style="left:479px;top:444px;width:381px;height:15px;border:1px dotted #000;box-sizing:border-box"></div>
<svg style="left:466px;top:446px" width="6" height="11"><path d="M0 0 L0 11 L5.5 5.5 Z" fill="#000"/></svg>
</body></html>
